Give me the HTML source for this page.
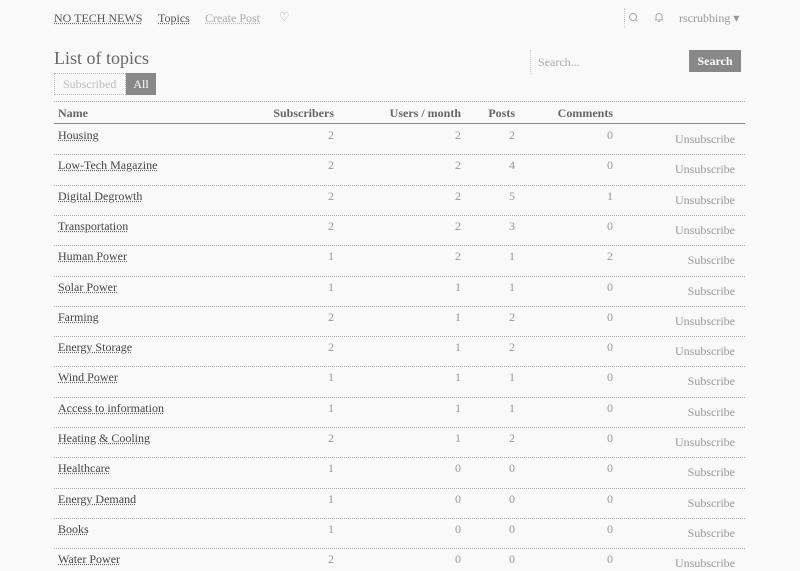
<!DOCTYPE html>
<html><head><meta charset="utf-8"><style>
body{margin:0;width:800px;height:570px;background:#f9f9f9;font-family:"Liberation Serif",serif;font-size:12px;color:#555;position:relative;overflow:hidden}
.a{position:absolute;white-space:nowrap}
.u{text-decoration:underline dotted #666}
.r{text-align:right}
.line{position:absolute;left:54px;width:691px;border-top:1px dotted #aaa;height:0}
.nm{color:#444}
.n{color:#999}
.act{color:#999}
</style></head><body>
<div class="a u" style="left:54px;top:11px;color:#555">NO TECH NEWS</div>
<div class="a u" style="left:158px;top:11px;color:#555">Topics</div>
<div class="a" style="left:205px;top:11px;color:#aaa;text-decoration:underline dotted #bbb">Create Post</div>
<div class="a" style="left:279px;top:10px;color:#aaa">♡</div>
<div class="a" style="left:624px;top:8px;height:20px;border-left:1px dotted #ccc"></div>
<svg class="a" style="left:628px;top:12px" width="10" height="11"><circle cx="5" cy="5" r="3.5" fill="none" stroke="#aaa"/><path d="M7.5 7.5L9.5 9.5" stroke="#aaa"/></svg>
<svg class="a" style="left:654px;top:12px" width="10" height="11"><path d="M2 8L2 5Q2 1.5 5 1.5Q8 1.5 8 5L8 8ZM1 8L9 8M4 9.5L6 9.5" fill="none" stroke="#aaa"/></svg>
<div class="a" style="left:679px;top:11px;color:#999">rscrubbing ▾</div>
<div class="a" style="left:54px;top:48px;font-size:18px;color:#666">List of topics</div>
<div class="a" style="left:54px;top:73px;width:72px;height:22px;border:1px dotted #bbb;box-sizing:border-box;color:#bbb;line-height:20px;padding-left:8px">Subscribed</div>
<div class="a" style="left:126px;top:73px;width:30px;height:22px;background:#888;color:#fff;line-height:22px;text-align:center">All</div>
<div class="a" style="left:530px;top:50px;height:24px;border-left:1px dotted #ccc"></div>
<div class="a" style="left:538px;top:55px;color:#aaa">Search...</div>
<div class="a" style="left:689px;top:50px;width:52px;height:22px;background:#888;color:#fff;line-height:22px;text-align:center;font-weight:bold">Search</div>
<div class="line" style="top:101px"></div>
<div class="a" style="left:58px;top:106px;font-weight:bold;color:#666">Name</div>
<div class="a r" style="left:234px;width:100px;top:106px;font-weight:bold;color:#666">Subscribers</div>
<div class="a r" style="left:341px;width:120px;top:106px;font-weight:bold;color:#666">Users / month</div>
<div class="a r" style="left:455px;width:60px;top:106px;font-weight:bold;color:#666">Posts</div>
<div class="a r" style="left:513px;width:100px;top:106px;font-weight:bold;color:#666">Comments</div>
<div class="a" style="left:54px;top:123px;width:691px;border-top:1px solid #888"></div>
<div id="rows"></div>
<script>
var d=[["Housing",2,2,2,0,1],["Low-Tech Magazine",2,2,4,0,1],["Digital Degrowth",2,2,5,1,1],["Transportation",2,2,3,0,1],["Human Power",1,2,1,2,0],["Solar Power",1,1,1,0,0],["Farming",2,1,2,0,1],["Energy Storage",2,1,2,0,1],["Wind Power",1,1,1,0,0],["Access to information",1,1,1,0,0],["Heating & Cooling",2,1,2,0,1],["Healthcare",1,0,0,0,0],["Energy Demand",1,0,0,0,0],["Books",1,0,0,0,0],["Water Power",2,0,0,0,1]];
var h="";
for(var i=0;i<d.length;i++){var t=124+i*30.3;var r=d[i];
h+='<div class="a u nm" style="left:58px;top:'+(t+4)+'px">'+r[0].replace("&","&amp;")+'</div>';
h+='<div class="a r n" style="left:234px;width:100px;top:'+(t+4)+'px">'+r[1]+'</div>';
h+='<div class="a r n" style="left:361px;width:100px;top:'+(t+4)+'px">'+r[2]+'</div>';
h+='<div class="a r n" style="left:455px;width:60px;top:'+(t+4)+'px">'+r[3]+'</div>';
h+='<div class="a r n" style="left:513px;width:100px;top:'+(t+4)+'px">'+r[4]+'</div>';
h+='<div class="a r act" style="left:615px;width:120px;top:'+(t+8)+'px">'+(r[5]?"Unsubscribe":"Subscribe")+'</div>';
if(i>0)h+='<div class="line" style="top:'+Math.round(t)+'px"></div>';}
document.getElementById("rows").innerHTML=h;
</script>
</body></html>
